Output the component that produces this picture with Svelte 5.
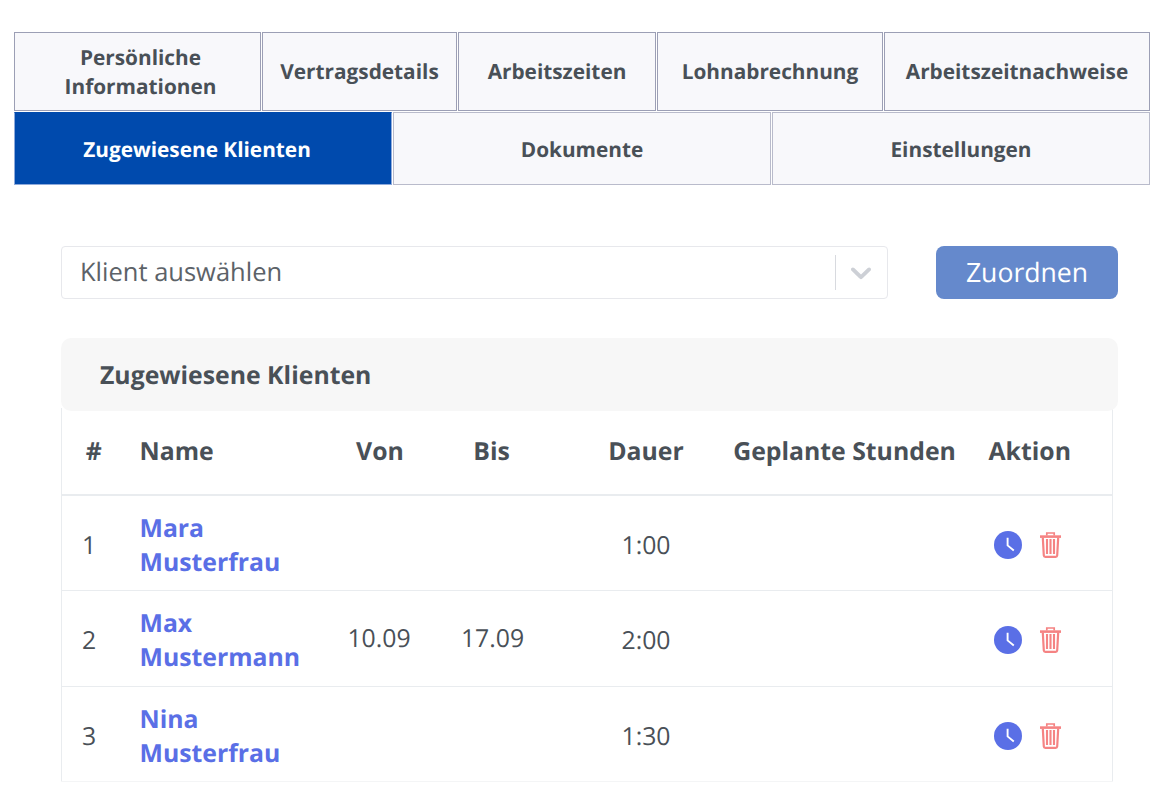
<script>
	const topTabs = [
		{ label: 'Persönliche Informationen', cls: 'w1' },
		{ label: 'Vertragsdetails', cls: 'w2' },
		{ label: 'Arbeitszeiten', cls: 'w3' },
		{ label: 'Lohnabrechnung', cls: 'w4' },
		{ label: 'Arbeitszeitnachweise', cls: 'w5' }
	];
	const bottomTabs = ['Zugewiesene Klienten', 'Dokumente', 'Einstellungen'];
	const clients = [
		{ id: 1, first: 'Mara', last: 'Musterfrau', from: '', to: '', duration: '1:00' },
		{ id: 2, first: 'Max', last: 'Mustermann', from: '10.09', to: '17.09', duration: '2:00' },
		{ id: 3, first: 'Nina', last: 'Musterfrau', from: '', to: '', duration: '1:30' }
	];
</script>

<div class="page">
	<nav class="tabs">
		<div class="tab-row first">
			{#each topTabs as tab}
				<button type="button" class="tab {tab.cls}">{tab.label}</button>
			{/each}
		</div>
		<div class="tab-row second">
			{#each bottomTabs as tab, i}
				<button type="button" class="tab" class:active={i === 0}>{tab}</button>
			{/each}
		</div>
	</nav>

	<section class="content">
		<div class="assign">
			<div class="select">
				<span class="placeholder">Klient auswählen</span>
				<span class="sep"></span>
				<svg class="chevron" width="20" height="13" viewBox="4.2 7 11.6 7.4" fill="#cdd0d6">
					<path d="M4.516 7.548c.436-.446 1.043-.481 1.576 0L10 11.295l3.908-3.747c.533-.481 1.141-.446 1.574 0 .436.445.408 1.197 0 1.615-.406.418-4.695 4.502-4.695 4.502a1.095 1.095 0 0 1-1.576 0S4.924 9.581 4.516 9.163c-.409-.418-.436-1.17 0-1.615z"/>
				</svg>
			</div>
			<button type="button" class="assign-btn"><span>Zuordnen</span></button>
		</div>

		<div class="card-head">Zugewiesene Klienten</div>

		<table>
			<colgroup>
				<col class="c-id" />
				<col class="c-name" />
				<col class="c-from" />
				<col class="c-to" />
				<col class="c-dur" />
				<col class="c-plan" />
				<col class="c-act" />
			</colgroup>
			<thead>
				<tr>
					<th class="hash">#</th>
					<th class="name">Name</th>
					<th class="from">Von</th>
					<th>Bis</th>
					<th class="dur">Dauer</th>
					<th>Geplante Stunden</th>
					<th class="act">Aktion</th>
				</tr>
			</thead>
			<tbody>
				{#each clients as client}
					<tr>
						<td class="num low">{client.id}</td>
						<td class="name low"><a href="#top">{client.first}<br />{client.last}</a></td>
						<td class="date">{client.from}</td>
						<td class="date to">{client.to}</td>
						<td class="dur low">{client.duration}</td>
						<td></td>
						<td class="act low">
							<div class="icons">
								<svg width="28" height="28" viewBox="0 0 28 28">
									<circle cx="14" cy="14" r="14" fill="#5a6fe6" />
									<path d="M13.6 6.8v7.6l6.2 5" fill="none" stroke="#fff" stroke-width="1.9" />
								</svg>
								<svg width="21" height="26" viewBox="0 0 21 26" fill="none" stroke="#f58383">
									<path d="M6.8 3.6V1h7.4v2.6" stroke-width="1.7" />
									<path d="M0 4.6h21" stroke-width="2.6" />
									<path d="M2.8 5.5l1 18c.1.9.7 1.4 1.5 1.4h10.4c.8 0 1.4-.5 1.5-1.4l1-18" stroke-width="2.2" />
									<path d="M7 7v15M10.5 7v15M14 7v15" stroke-width="2.1" />
								</svg>
							</div>
						</td>
					</tr>
				{/each}
			</tbody>
		</table>
	</section>
</div>

<style>
	:global(body) {
		margin: 0;
		background: #fff;
		font-family: 'Open Sans', 'Liberation Sans', sans-serif;
		color: #495057;
		text-rendering: geometricPrecision;
	}

	.page {
		padding: 32px 14px 11px;
	}

	.tab-row {
		gap: 1px;
		width: 1136px;
	}

	.first {
		display: flex;
		height: 79px;
	}

	.second {
		display: grid;
		grid-template-columns: 1fr 1fr 1fr;
		height: 73px;
		margin-top: 1px;
	}

	.tab {
		min-width: 0;
		padding: 2px 10px 0;
		background: #f8f8fb;
		border: 1px solid #9c9fb5;
		font-family: inherit;
		font-size: 20.8px;
		font-weight: 700;
		line-height: 29px;
		color: #495057;
		text-rendering: geometricPrecision;
	}

	.w1 { flex: 0 0 247px; padding-left: 16px; }
	.w2 { flex: 0 0 195px; }
	.w3 { flex: 0 0 198px; }
	.w4 { flex: 0 0 226px; }
	.w5 { flex: 0 0 266px; }

	.second .tab {
		padding-top: 4px;
		border-color: #b9bbcb;
	}

	.second .tab.active {
		padding-right: 22px;
		background: #004aad;
		border-color: #8eaadb;
		border-top-color: #004aad;
		color: #fff;
	}

	.content {
		padding: 61px 32px 0 47px;
	}

	.assign {
		display: flex;
		justify-content: space-between;
		height: 53px;
	}

	.select {
		display: flex;
		align-items: center;
		width: 827px;
		box-sizing: border-box;
		padding: 0 18px;
		border: 1px solid #e7e8ec;
		border-radius: 4px;
	}

	.placeholder {
		flex: 1;
		padding-bottom: 1px;
		font-size: 25.5px;
		color: #5c6268;
	}

	.sep {
		width: 1px;
		height: 35px;
		background: #d8dadf;
		margin-right: 15px;
	}

	.chevron {
		margin: 2px -2px 0 0;
	}

	.assign-btn {
		width: 182px;
		padding: 0 0 1px;
		background: #6589cc;
		border: none;
		border-radius: 8px;
		font-family: inherit;
		font-size: 26.6px;
		color: #fff;
		text-rendering: geometricPrecision;
	}

	.card-head {
		position: relative;
		margin-top: 39px;
		height: 73px;
		box-sizing: border-box;
		padding: 0 39px;
		display: flex;
		align-items: center;
		background: #f7f7f7;
		border-radius: 10px;
		font-size: 24.8px;
		font-weight: 700;
		color: #495057;
	}

	table {
		width: 1051px;
		margin-top: -3px;
		table-layout: fixed;
		border-collapse: collapse;
		border-left: 1px solid #e9ecef;
		border-right: 1px solid #e9ecef;
		font-size: 24.8px;
	}

	.c-id { width: 52px; }
	.c-name { width: 209px; }
	.c-from { width: 113px; }
	.c-to { width: 112px; }
	.c-dur { width: 175px; }
	.c-plan { width: 244px; }
	.c-act { width: 146px; }

	th {
		box-sizing: border-box;
		height: 87px;
		padding: 0;
		text-align: center;
		font-weight: 700;
		white-space: nowrap;
		color: #495057;
		border-bottom: 2px solid #e9ecef;
		vertical-align: middle;
	}

	th.hash {
		padding-left: 12px;
	}

	th.from {
		padding-left: 2px;
	}

	td {
		box-sizing: border-box;
		height: 95.5px;
		padding: 0;
		text-align: center;
		border-bottom: 1px solid #e9ecef;
		color: #495057;
	}

	tbody tr:last-child td {
		border-bottom-color: #f4f5f6;
	}

	td.date {
		padding-bottom: 1px;
	}

	td.to {
		padding-left: 2px;
	}

	td.num {
		padding-left: 20px;
		text-align: left;
	}

	.name {
		text-align: left;
	}

	th.name,
	td.name {
		padding-left: 26px;
	}

	.name a {
		display: block;
		line-height: 34px;
		font-weight: 700;
		color: #5a6fe6;
		text-decoration: none;
	}

	th.dur,
	td.dur {
		padding-left: 22px;
	}

	td.low {
		padding-top: 4px;
	}

	th.act,
	td.act {
		padding-right: 19px;
	}

	.icons {
		display: flex;
		align-items: center;
		justify-content: center;
		gap: 18px;
		padding-right: 4px;
	}
</style>
